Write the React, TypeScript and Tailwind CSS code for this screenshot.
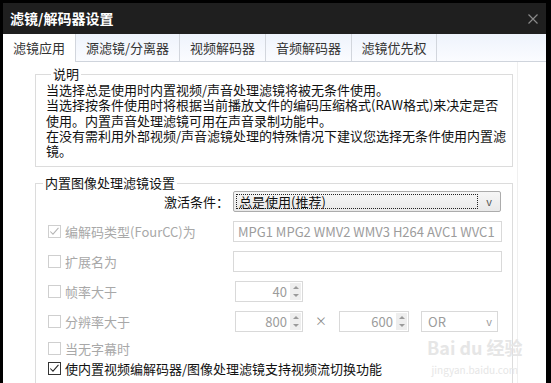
import clsx from "clsx";

const tabs = [
  { label: "滤镜应用", w: "w-[73px]", active: true },
  { label: "源滤镜/分离器", w: "w-[104px]" },
  { label: "视频解码器", w: "w-[86px]" },
  { label: "音频解码器", w: "w-[86px]" },
  { label: "滤镜优先权", w: "w-[85px]" },
];

function Check({ checked, disabled }: { checked?: boolean; disabled?: boolean }) {
  return (
    <span
      className={clsx(
        "flex h-[13px] w-[13px] shrink-0 items-center justify-center border bg-white",
        disabled ? "border-[#cfcfcf]" : "border-[#333]"
      )}
    >
      {checked && (
        <svg viewBox="0 0 13 13" className="h-[11px] w-[11px]">
          <path
            d="M1.5 6.5l3.2 3.2 6.5-7.4"
            fill="none"
            stroke={disabled ? "#b4b4b4" : "#222"}
            strokeWidth="1.2"
          />
        </svg>
      )}
    </span>
  );
}

function Spin({ value, w = "w-[68px]" }: { value: string; w?: string }) {
  return (
    <div className={clsx("flex h-[21px] border border-[#d9d9d9] bg-white", w)}>
      <span className="flex-1 pr-[3px] text-right leading-[19px] text-[#9c9c9c]">{value}</span>
      <div className="my-[1px] mr-[1px] flex w-[11px] flex-col items-center justify-around bg-[#eeeeee]">
        <span className="h-0 w-0 border-x-[3px] border-b-[3px] border-x-transparent border-b-[#9a9a9a]" />
        <span className="h-0 w-0 border-x-[3px] border-t-[3px] border-x-transparent border-t-[#9a9a9a]" />
      </div>
    </div>
  );
}

function CheckRow({
  label,
  checked,
  disabled,
  children,
  h,
}: {
  label: string;
  checked?: boolean;
  disabled?: boolean;
  children?: React.ReactNode;
  h: string;
}) {
  return (
    <div className={clsx("flex items-center", h)}>
      <div className="flex w-[197px] shrink-0 items-center gap-[4px] pl-[12px]">
        <Check checked={checked} disabled={disabled} />
        <span className={clsx("whitespace-nowrap", disabled ? "text-[#a8a8a8]" : "text-[#111]")}>{label}</span>
      </div>
      {children}
    </div>
  );
}

export default function App() {
  return (
    <div className="h-[383px] w-[551px] overflow-hidden bg-black pl-[3px] pr-[5px] pt-[3px] font-['Noto_Sans_CJK_SC','Microsoft_YaHei',sans-serif] text-[13px]">
      {/* 标题栏 */}
      <div className="flex h-[31px] items-center justify-between bg-[#1f1f1f] pl-[7px] pr-[8px]">
        <span className="text-[14px] font-bold text-white">滤镜/解码器设置</span>
        <svg viewBox="0 0 10 10" className="h-[10px] w-[10px]">
          <path d="M0.5 0.5l9 9M9.5 0.5l-9 9" stroke="#8a8a8a" strokeWidth="1.2" />
        </svg>
      </div>

      <div className="relative h-[352px] bg-white">
        {/* 标签页 */}
        <div className="flex h-[28px] border-b border-[#cfd4dc] bg-gradient-to-b from-[#eef3fc] to-[#fbfcff]">
          {tabs.map((t) => (
            <div
              key={t.label}
              className={clsx(
                "flex items-center justify-center border-r border-[#d2d6dd] text-[#333]",
                t.w,
                t.active && "-mb-px h-[28px] bg-white"
              )}
            >
              {t.label}
            </div>
          ))}
        </div>

        <div className="w-[515px] border-r border-[#f0f0f0] pt-[4px]">
          {/* 说明 */}
          <fieldset className="ml-[32px] w-[478px] border border-[#dcdcdc] pb-[8px] pl-[10px]">
            <legend className="ml-[5px] px-[2px] leading-[16px] text-[#111]">说明</legend>
            <div className="leading-[15.3px] text-[#111]">
              <div>当选择总是使用时内置视频/声音处理滤镜将被无条件使用。</div>
              <div>当选择按条件使用时将根据当前播放文件的编码压缩格式(RAW格式)来决定是否</div>
              <div>使用。内置声音处理滤镜可用在声音录制功能中。</div>
              <div>在没有需利用外部视频/声音滤镜处理的特殊情况下建议您选择无条件使用内置滤</div>
              <div>镜。</div>
            </div>
          </fieldset>

          {/* 内置图像处理滤镜设置 */}
          <fieldset className="ml-[32px] mt-[8px] h-[230px] w-[478px] border border-[#dcdcdc]">
            <legend className="ml-[7px] px-[2px] leading-[16px] text-[#111]">内置图像处理滤镜设置</legend>

            <div className="flex h-[20px] items-center">
              <span className="w-[197px] shrink-0 pr-[4px] text-right text-[#111]">激活条件：</span>
              <div className="flex h-[21px] w-[268px] items-center rounded-[2px] border border-[#acacac] bg-gradient-to-b from-[#f6f6f6] to-[#e9e9e9]">
                <span className="ml-[2px] h-[15px] w-[242px] border border-dotted border-[#222] pl-[2px] leading-[13px] text-[#111]">
                  总是使用(推荐)
                </span>
                <span className="flex-1 text-center text-[11px] text-[#555]">v</span>
              </div>
            </div>

            <CheckRow label="编解码类型(FourCC)为" checked disabled h="mt-[5px] h-[30px]">
              <div className="flex h-[21px] w-[269px] items-center border border-[#d9d9d9] pl-[4px] text-[#9c9c9c]">
                MPG1 MPG2 WMV2 WMV3 H264 AVC1 WVC1
              </div>
            </CheckRow>

            <CheckRow label="扩展名为" disabled h="h-[30px]">
              <div className="h-[21px] w-[269px] border border-[#d9d9d9]" />
            </CheckRow>

            <CheckRow label="帧率大于" disabled h="h-[30px]">
              <div className="ml-[2px]">
                <Spin value="40" />
              </div>
            </CheckRow>

            <CheckRow label="分辨率大于" disabled h="h-[30px]">
              <div className="ml-[2px] flex items-center">
                <Spin value="800" />
                <span className="w-[36px] text-center text-[12px] text-[#8a8a8a]">×</span>
                <Spin value="600" w="w-[70px]" />
                <div className="ml-[12px] flex h-[21px] w-[77px] items-center border border-[#d9d9d9] pl-[6px] text-[#9c9c9c]">
                  <span className="flex-1">OR</span>
                  <span className="pr-[5px] text-[11px]">v</span>
                </div>
              </div>
            </CheckRow>

            <CheckRow label="当无字幕时" disabled h="h-[24px]" />

            <div className="flex h-[16px] items-center gap-[4px] pl-[12px]">
              <Check checked />
              <span className="whitespace-nowrap text-[#111]">使内置视频编解码器/图像处理滤镜支持视频流切换功能</span>
            </div>
          </fieldset>
        </div>

        {/* 水印 */}
        <div className="pointer-events-none absolute left-[424px] top-[300px] flex flex-col items-center gap-[2px] text-[#e6e6e6]">
          <span className="text-[18px] font-bold leading-[26px]">Bai du 经验</span>
          <span className="text-[10px] leading-[15px]">jingyan.baidu.com</span>
        </div>
      </div>
    </div>
  );
}
